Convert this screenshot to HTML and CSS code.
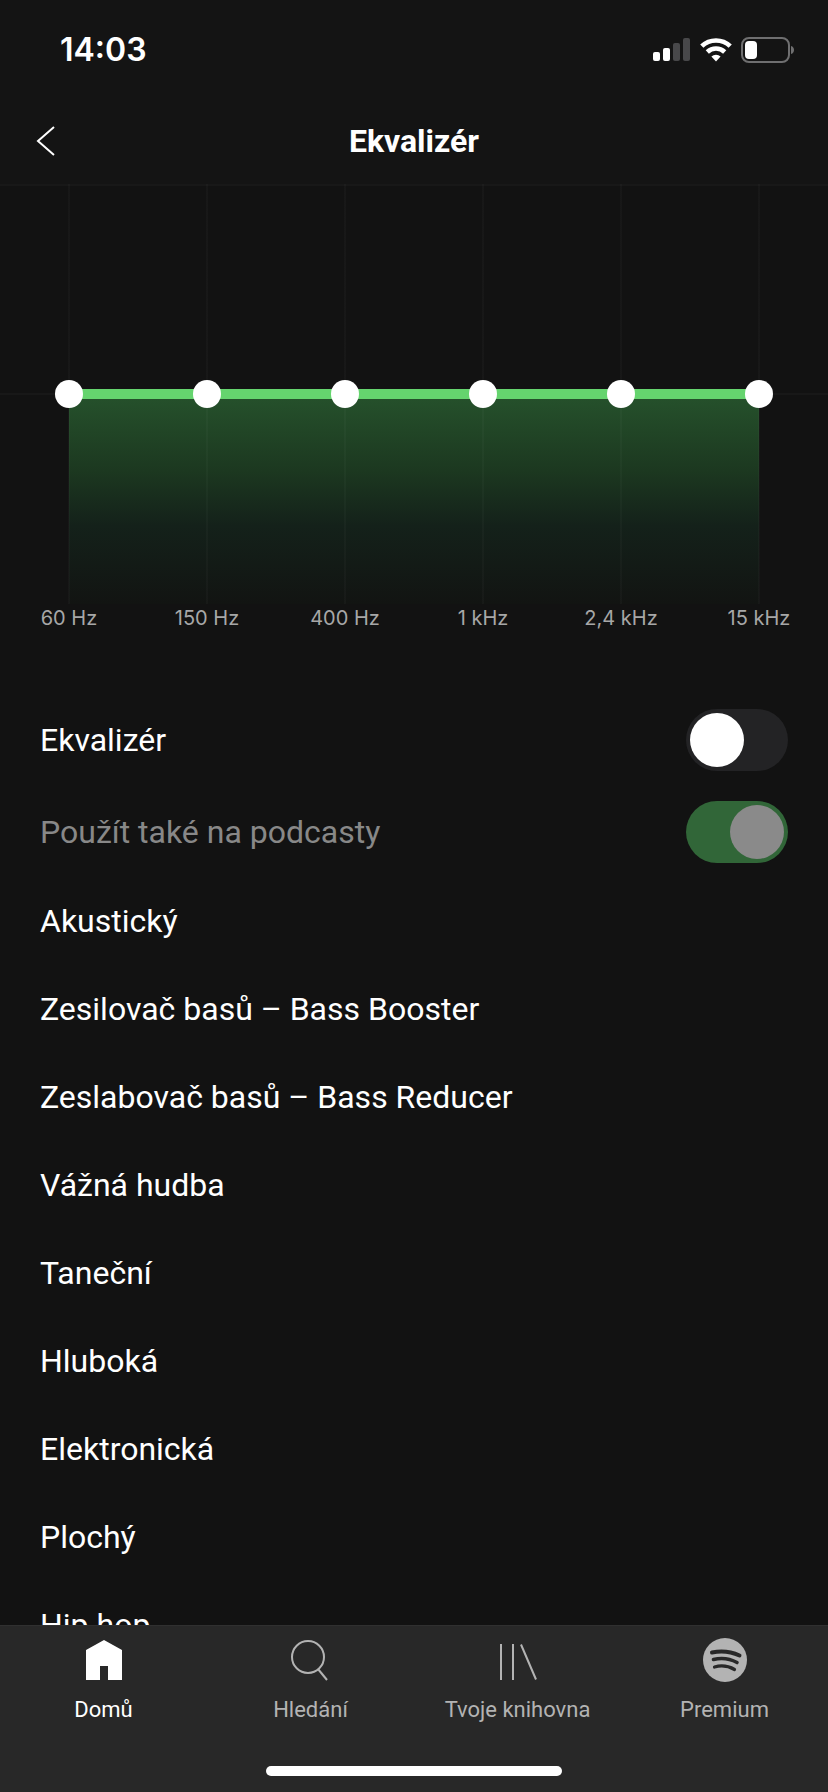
FILE: index.html
```html
<!DOCTYPE html>
<html lang="cs">
<head>
<meta charset="utf-8">
<meta name="viewport" content="width=device-width, initial-scale=1">
<title>Ekvalizér</title>
<link rel="stylesheet" href="styles.css">
</head>
<body class="app">
<header class="top">
  <div class="status">
    <time class="status-time">14:03</time>
    <div class="status-icons">
      <svg width="38" height="26" viewBox="0 0 38 26" aria-hidden="true">
        <rect x="0" y="15" width="7" height="9" rx="2" fill="#fff"/>
        <rect x="10" y="11" width="7" height="13" rx="2" fill="#fff"/>
        <rect x="20" y="6" width="7" height="18" rx="2" fill="#48484a"/>
        <rect x="30" y="1" width="7" height="23" rx="2" fill="#48484a"/>
      </svg>
      <svg width="32" height="26" viewBox="0 0 32 26" aria-hidden="true">
        <g fill="none" stroke="#fff" stroke-width="4.6">
          <path d="M1.8 9.2A20.4 20.4 0 0 1 30.2 9.2"/>
          <path d="M7.3 15A12.6 12.6 0 0 1 24.7 15"/>
        </g>
        <path d="M11.4 19.6A6.8 6.8 0 0 1 20.6 19.6L16 24.4Z" fill="#fff"/>
      </svg>
      <svg width="54" height="26" viewBox="0 0 54 26" aria-hidden="true">
        <rect x="1" y="1" width="47" height="24" rx="7" fill="none" stroke="#6f6f70" stroke-width="2"/>
        <rect x="4" y="4" width="12" height="18" rx="4" fill="#fff"/>
        <path d="M50 9C54 10 54 16 50 17Z" fill="#6f6f70"/>
      </svg>
    </div>
  </div>
  <div class="nav">
    <button class="back" type="button" aria-label="Zpět">
      <svg width="20" height="30" viewBox="0 0 20 30" aria-hidden="true"><path d="M18 1L2 15L18 29" fill="none" stroke="#fff" stroke-width="2"/></svg>
    </button>
    <h1 class="title">Ekvalizér</h1>
  </div>
</header>

<main class="content">
  <section class="equalizer" aria-label="Ekvalizér">
    <div class="curve"></div>
    <div class="band"><input class="band-slider" id="b1" type="range" min="-12" max="12" value="0"><label class="band-label" for="b1">60 Hz</label></div>
    <div class="band"><input class="band-slider" id="b2" type="range" min="-12" max="12" value="0"><label class="band-label" for="b2">150 Hz</label></div>
    <div class="band"><input class="band-slider" id="b3" type="range" min="-12" max="12" value="0"><label class="band-label" for="b3">400 Hz</label></div>
    <div class="band"><input class="band-slider" id="b4" type="range" min="-12" max="12" value="0"><label class="band-label" for="b4">1 kHz</label></div>
    <div class="band"><input class="band-slider" id="b5" type="range" min="-12" max="12" value="0"><label class="band-label" for="b5">2,4 kHz</label></div>
    <div class="band"><input class="band-slider" id="b6" type="range" min="-12" max="12" value="0"><label class="band-label" for="b6">15 kHz</label></div>
  </section>

  <section class="settings">
    <div class="setting">
      <label for="eq-on">Ekvalizér</label>
      <input class="switch" id="eq-on" type="checkbox" role="switch">
    </div>
    <div class="setting setting-disabled">
      <label for="eq-podcasts">Použít také na podcasty</label>
      <input class="switch" id="eq-podcasts" type="checkbox" role="switch" checked disabled>
    </div>
  </section>

  <ul class="presets">
    <li><button class="preset" type="button">Akustický</button></li>
    <li><button class="preset" type="button">Zesilovač basů – Bass Booster</button></li>
    <li><button class="preset" type="button">Zeslabovač basů – Bass Reducer</button></li>
    <li><button class="preset" type="button">Vážná hudba</button></li>
    <li><button class="preset" type="button">Taneční</button></li>
    <li><button class="preset" type="button">Hluboká</button></li>
    <li><button class="preset" type="button">Elektronická</button></li>
    <li><button class="preset" type="button">Plochý</button></li>
    <li><button class="preset" type="button">Hip hop</button></li>
  </ul>
</main>

<footer class="bottom">
  <nav class="tabs">
    <a class="tab tab-active" href="#home" aria-current="page">
      <svg width="44" height="44" viewBox="0 0 44 44" aria-hidden="true"><path d="M22 2L40 12V42H26V28H18V42H4V12Z" fill="currentColor"/></svg>
      <span>Domů</span>
    </a>
    <a class="tab" href="#search">
      <svg width="44" height="44" viewBox="0 0 44 44" aria-hidden="true"><g fill="none" stroke="currentColor" stroke-width="2"><circle cx="19" cy="19" r="16"/><path d="M29 31L38 42"/></g></svg>
      <span>Hledání</span>
    </a>
    <a class="tab" href="#library">
      <svg width="44" height="44" viewBox="0 0 44 44" aria-hidden="true"><path d="M5 6V42M17 6V42M25 6.500L40 41.500" fill="none" stroke="currentColor" stroke-width="2"/></svg>
      <span>Tvoje knihovna</span>
    </a>
    <a class="tab" href="#premium">
      <svg width="44" height="44" viewBox="0 0 44 44" aria-hidden="true"><circle cx="22" cy="22" r="22" fill="currentColor"/><g fill="none" stroke="#282828" stroke-linecap="round"><path d="M9 14.500Q23.500 11.500 36.500 17.500" stroke-width="4"/><path d="M10.500 21.500Q23 18.500 34 24.500" stroke-width="3.600"/><path d="M11.500 29Q22 26 31.500 31.500" stroke-width="3.200"/></g></svg>
      <span>Premium</span>
    </a>
  </nav>
  <div class="home-indicator"></div>
</footer>
</body>
</html>
```

FILE: styles.css
```css
* {
  box-sizing: border-box;
}

.app {
  margin: 0;
  height: 100vh;
  display: flex;
  flex-direction: column;
  background: #121212;
  color: #fff;
  font-family: Roboto, "Liberation Sans", sans-serif;
  font-size: 32px;
  line-height: 40px;
}

/* Status bar and title */
.top {
  background: #141414;
}

.status {
  display: flex;
  justify-content: space-between;
  align-items: center;
  height: 96px;
  padding: 4px 33px 0 60px;
}

.status-time {
  font-family: Inter, sans-serif;
  font-weight: 600;
}

.status-icons {
  display: flex;
  align-items: center;
  gap: 9px;
}

.nav {
  display: grid;
  grid-template-columns: 1fr auto 1fr;
  align-items: center;
  height: 88px;
  padding: 2px 36px 0;
}

.back {
  justify-self: start;
  display: flex;
  padding: 0;
  border: 0;
  background: none;
}

.title {
  margin: 0;
  font-size: 32px;
  font-weight: 700;
}

.content {
  flex: 1;
  min-height: 0;
  overflow-y: auto;
  scrollbar-width: none;
}

/* Equalizer bands */
.equalizer {
  position: relative;
  display: grid;
  grid-template-columns: repeat(6, 1fr);
  background:
    linear-gradient(#181818, #181818) 0 0 / 100% 2px no-repeat,
    linear-gradient(#181818, #181818) 0 209px / 100% 2px no-repeat;
}

.curve {
  position: absolute;
  top: 205px;
  left: calc(100% / 12);
  right: calc(100% / 12);
  height: 215px;
  border-top: 10px solid #65d46e;
  background: linear-gradient(#25502b, #1c3820 35%, #14211a 62%, #121412);
}

.band {
  position: relative;
  display: flex;
  flex-direction: column;
  align-items: center;
}

.band-slider {
  appearance: none;
  writing-mode: vertical-lr;
  direction: rtl;
  width: 28px;
  height: 420px;
  margin: 0;
  background: linear-gradient(#ffffff06, #ffffff06) center / 2px 100% no-repeat;
}

.band-slider::-webkit-slider-thumb {
  appearance: none;
  width: 28px;
  height: 28px;
  border-radius: 50%;
  background: #fff;
}

.band-label {
  font-family: Inter, sans-serif;
  font-size: 20px;
  line-height: 28px;
  color: #a7a7a7;
}

/* Toggles */
.settings {
  display: flex;
  flex-direction: column;
  gap: 30px;
  padding: 77px 40px 0;
}

.setting {
  display: flex;
  justify-content: space-between;
  align-items: center;
}

.setting-disabled {
  color: #888;
}

.switch {
  appearance: none;
  display: flex;
  width: 102px;
  height: 62px;
  margin: 0;
  padding: 4px;
  border-radius: 31px;
  background: #232325;
}

.switch::before {
  content: "";
  width: 54px;
  height: 54px;
  border-radius: 50%;
  background: #fff;
}

.switch:checked {
  justify-content: flex-end;
  background: #316638;
}

.switch:disabled::before {
  background: #8a8a8a;
}

/* Preset list */
.presets {
  margin: 14px 0 0;
  padding: 0;
  list-style: none;
}

.preset {
  display: block;
  width: 100%;
  padding: 24px 40px;
  border: 0;
  background: none;
  color: inherit;
  font: inherit;
  text-align: left;
}

/* Bottom navigation */
.bottom {
  background: #282828;
  border-top: 1px solid #303030;
}

.tabs {
  display: grid;
  grid-template-columns: repeat(4, 1fr);
  padding-top: 12px;
}

.tab {
  display: flex;
  flex-direction: column;
  align-items: center;
  gap: 14px;
  color: #b3b3b3;
  font-size: 22px;
  line-height: 28px;
  text-decoration: none;
}

.tab-active {
  color: #fff;
}

.home-indicator {
  width: 296px;
  height: 10px;
  margin: 42px auto 16px;
  border-radius: 5px;
  background: #fff;
}
```
